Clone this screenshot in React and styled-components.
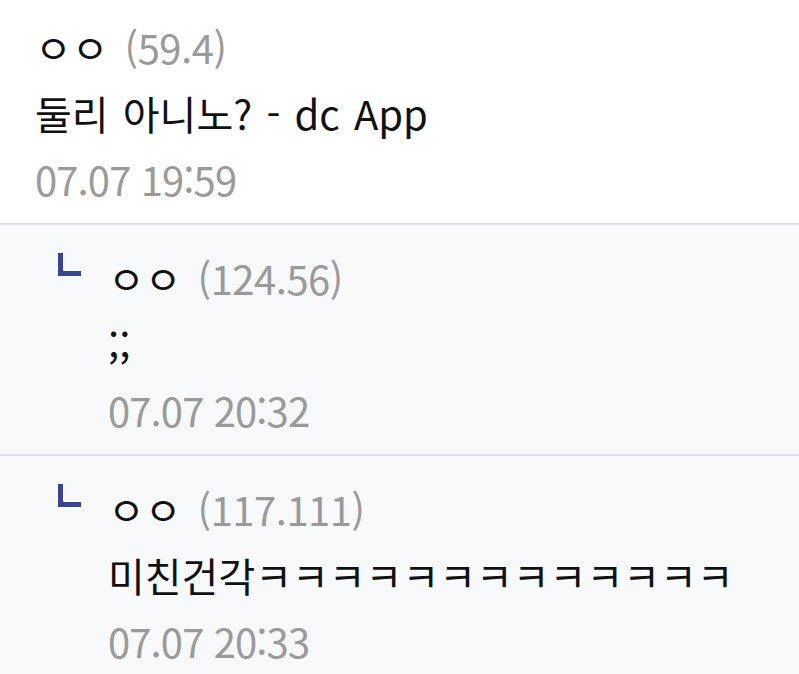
import React from "react";
import styled, { createGlobalStyle } from "styled-components";

const Global = createGlobalStyle`
  html, body { margin: 0; padding: 0; background: #ffffff; }
  body { font-family: "Noto Sans CJK KR", "Noto Sans", sans-serif; }
`;

const List = styled.div`
  display: flex;
  flex-direction: column;
  width: 799px;
  font-family: "Noto Sans CJK KR", sans-serif;
`;

const Comment = styled.div`
  display: flex;
  align-items: flex-start;
  background: ${(p) => (p.$reply ? "#f8f9fb" : "#ffffff")};
  border-top: ${(p) => (p.$first ? "none" : "2px solid #dfe1ea")};
  padding: ${(p) => (p.$reply ? "20px 20px 11px 58px" : "14px 20px 11px 35px")};
`;

const Marker = styled.span`
  flex: none;
  width: 18px;
  height: 18px;
  margin-top: 8px;
  margin-right: 27px;
  border-left: 5px solid #3a4590;
  border-bottom: 5px solid #3a4590;
`;

const Body = styled.div`
  display: flex;
  flex-direction: column;
`;

const Line = styled.div`
  font-size: 40px;
  line-height: 66px;
  color: ${(p) => (p.$muted ? "#9a9a9a" : "#111111")};
  word-spacing: ${(p) => (p.$wide ? "3px" : "0")};
  letter-spacing: ${(p) => (p.$muted ? "-0.9px" : "0")};
  white-space: nowrap;
`;

const Ip = styled.span`
  color: #9a9a9a;
  margin-left: 16px;
  letter-spacing: -0.5px;
`;

const comments = [
  { name: "ㅇㅇ", ip: "(59.4)", text: "둘리 아니노? - dc App", time: "07.07 19:59" },
  { name: "ㅇㅇ", ip: "(124.56)", text: ";;", time: "07.07 20:32", reply: true },
  { name: "ㅇㅇ", ip: "(117.111)", text: "미친건각ㅋㅋㅋㅋㅋㅋㅋㅋㅋㅋㅋㅋㅋ", time: "07.07 20:33", reply: true },
];

export default function App() {
  return (
    <>
      <Global />
      <List lang="ko">
        {comments.map((c, i) => (
          <Comment key={i} $reply={c.reply} $first={i === 0}>
            {c.reply && <Marker />}
            <Body>
              <Line>
                {c.name}
                <Ip>{c.ip}</Ip>
              </Line>
              <Line $wide>{c.text}</Line>
              <Line $muted>{c.time}</Line>
            </Body>
          </Comment>
        ))}
      </List>
    </>
  );
}
